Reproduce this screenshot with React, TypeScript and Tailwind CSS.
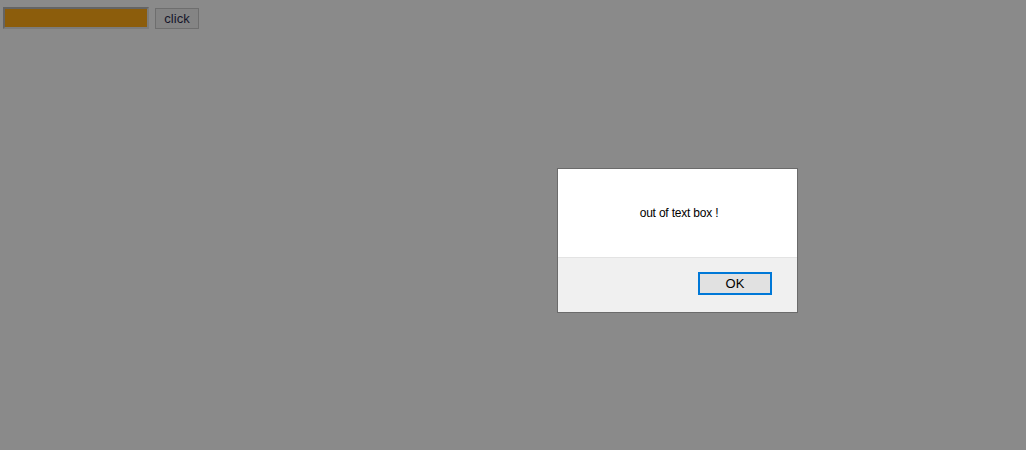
export default function App() {
  return (
    <div className="relative w-[1026px] h-[450px] bg-[#8a8a8a] font-['Liberation_Sans',Arial,sans-serif] overflow-hidden">
      {/* page under the dimmed overlay */}
      <div className="flex items-start gap-[6px] pt-[7px] pl-[3px]">
        <div className="w-[146px] h-[22px] border-2 border-t-[#646464] border-l-[#646464] border-r-[#7c7c7c] border-b-[#7c7c7c] bg-[#8c5d0c]" />
        <button className="mt-[1px] h-[21px] w-[44px] border border-[#6e6e6e] bg-[#848484] text-[13px] leading-none text-[#16162a]">
          click
        </button>
      </div>

      {/* alert dialog */}
      <div className="absolute left-[557px] top-[168px] w-[241px] h-[145px] border border-[#6b6b6b] bg-white flex flex-col">
        <div className="h-[88px] flex items-center justify-center pl-[3px] text-[12px] tracking-[-0.2px] text-black">
          out of text box !
        </div>
        <div className="flex-1 bg-[#f0f0f0] border-t border-[#e3e3e3] flex justify-end items-start pt-[14px] pr-[25px]">
          <button className="w-[74px] h-[23px] border-2 border-[#0078d7] bg-[#e1e1e1] text-[13px] leading-none text-black">
            OK
          </button>
        </div>
      </div>
    </div>
  );
}
